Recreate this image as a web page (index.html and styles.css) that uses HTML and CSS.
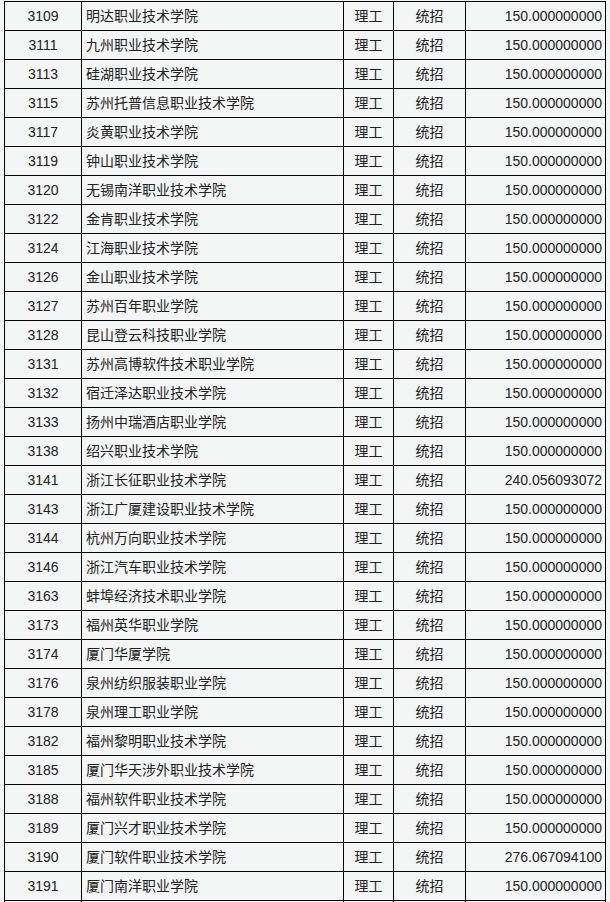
FILE: index.html
```html
<!DOCTYPE html>
<html lang="zh-CN">
<head>
<meta charset="utf-8">
<title>院校录取分数</title>
<link rel="stylesheet" href="styles.css">
</head>
<body>
<table class="score-table">
<colgroup>
<col class="c-code"><col class="c-name"><col class="c-type"><col class="c-batch"><col class="c-score">
</colgroup>
<tbody>
<tr><td class="code">3109</td><td class="name">明达职业技术学院</td><td class="mid">理工</td><td class="mid">统招</td><td class="score">150.000000000</td></tr>
<tr><td class="code">3111</td><td class="name">九州职业技术学院</td><td class="mid">理工</td><td class="mid">统招</td><td class="score">150.000000000</td></tr>
<tr><td class="code">3113</td><td class="name">硅湖职业技术学院</td><td class="mid">理工</td><td class="mid">统招</td><td class="score">150.000000000</td></tr>
<tr><td class="code">3115</td><td class="name">苏州托普信息职业技术学院</td><td class="mid">理工</td><td class="mid">统招</td><td class="score">150.000000000</td></tr>
<tr><td class="code">3117</td><td class="name">炎黄职业技术学院</td><td class="mid">理工</td><td class="mid">统招</td><td class="score">150.000000000</td></tr>
<tr><td class="code">3119</td><td class="name">钟山职业技术学院</td><td class="mid">理工</td><td class="mid">统招</td><td class="score">150.000000000</td></tr>
<tr><td class="code">3120</td><td class="name">无锡南洋职业技术学院</td><td class="mid">理工</td><td class="mid">统招</td><td class="score">150.000000000</td></tr>
<tr><td class="code">3122</td><td class="name">金肯职业技术学院</td><td class="mid">理工</td><td class="mid">统招</td><td class="score">150.000000000</td></tr>
<tr><td class="code">3124</td><td class="name">江海职业技术学院</td><td class="mid">理工</td><td class="mid">统招</td><td class="score">150.000000000</td></tr>
<tr><td class="code">3126</td><td class="name">金山职业技术学院</td><td class="mid">理工</td><td class="mid">统招</td><td class="score">150.000000000</td></tr>
<tr><td class="code">3127</td><td class="name">苏州百年职业学院</td><td class="mid">理工</td><td class="mid">统招</td><td class="score">150.000000000</td></tr>
<tr><td class="code">3128</td><td class="name">昆山登云科技职业学院</td><td class="mid">理工</td><td class="mid">统招</td><td class="score">150.000000000</td></tr>
<tr><td class="code">3131</td><td class="name">苏州高博软件技术职业学院</td><td class="mid">理工</td><td class="mid">统招</td><td class="score">150.000000000</td></tr>
<tr><td class="code">3132</td><td class="name">宿迁泽达职业技术学院</td><td class="mid">理工</td><td class="mid">统招</td><td class="score">150.000000000</td></tr>
<tr><td class="code">3133</td><td class="name">扬州中瑞酒店职业学院</td><td class="mid">理工</td><td class="mid">统招</td><td class="score">150.000000000</td></tr>
<tr><td class="code">3138</td><td class="name">绍兴职业技术学院</td><td class="mid">理工</td><td class="mid">统招</td><td class="score">150.000000000</td></tr>
<tr><td class="code">3141</td><td class="name">浙江长征职业技术学院</td><td class="mid">理工</td><td class="mid">统招</td><td class="score">240.056093072</td></tr>
<tr><td class="code">3143</td><td class="name">浙江广厦建设职业技术学院</td><td class="mid">理工</td><td class="mid">统招</td><td class="score">150.000000000</td></tr>
<tr><td class="code">3144</td><td class="name">杭州万向职业技术学院</td><td class="mid">理工</td><td class="mid">统招</td><td class="score">150.000000000</td></tr>
<tr><td class="code">3146</td><td class="name">浙江汽车职业技术学院</td><td class="mid">理工</td><td class="mid">统招</td><td class="score">150.000000000</td></tr>
<tr><td class="code">3163</td><td class="name">蚌埠经济技术职业学院</td><td class="mid">理工</td><td class="mid">统招</td><td class="score">150.000000000</td></tr>
<tr><td class="code">3173</td><td class="name">福州英华职业学院</td><td class="mid">理工</td><td class="mid">统招</td><td class="score">150.000000000</td></tr>
<tr><td class="code">3174</td><td class="name">厦门华厦学院</td><td class="mid">理工</td><td class="mid">统招</td><td class="score">150.000000000</td></tr>
<tr><td class="code">3176</td><td class="name">泉州纺织服装职业学院</td><td class="mid">理工</td><td class="mid">统招</td><td class="score">150.000000000</td></tr>
<tr><td class="code">3178</td><td class="name">泉州理工职业学院</td><td class="mid">理工</td><td class="mid">统招</td><td class="score">150.000000000</td></tr>
<tr><td class="code">3182</td><td class="name">福州黎明职业技术学院</td><td class="mid">理工</td><td class="mid">统招</td><td class="score">150.000000000</td></tr>
<tr><td class="code">3185</td><td class="name">厦门华天涉外职业技术学院</td><td class="mid">理工</td><td class="mid">统招</td><td class="score">150.000000000</td></tr>
<tr><td class="code">3188</td><td class="name">福州软件职业技术学院</td><td class="mid">理工</td><td class="mid">统招</td><td class="score">150.000000000</td></tr>
<tr><td class="code">3189</td><td class="name">厦门兴才职业技术学院</td><td class="mid">理工</td><td class="mid">统招</td><td class="score">150.000000000</td></tr>
<tr><td class="code">3190</td><td class="name">厦门软件职业技术学院</td><td class="mid">理工</td><td class="mid">统招</td><td class="score">276.067094100</td></tr>
<tr><td class="code">3191</td><td class="name">厦门南洋职业学院</td><td class="mid">理工</td><td class="mid">统招</td><td class="score">150.000000000</td></tr>
<tr><td class="code"></td><td class="name"></td><td class="mid"></td><td class="mid"></td><td class="score"></td></tr>
</tbody>
</table>
</body>
</html>
```

FILE: styles.css
```css
html {
  overflow: hidden;
  background: #f4f5f5;
}
body {
  margin: 0;
  padding: 1px 0 0 4px;
  background: #f4f5f5;
  color: #222;
  font-family: "Liberation Sans", "Noto Sans CJK SC", sans-serif;
  font-size: 14px;
}
.score-table {
  border-collapse: collapse;
  table-layout: fixed;
  width: 602px;
}
.c-code { width: 77px; }
.c-name { width: 262px; }
.c-type { width: 50px; }
.c-batch { width: 72px; }
.c-score { width: 140px; }
.score-table td {
  border: 1px solid #000;
  height: 28px;
  padding: 0;
  line-height: 28px;
  white-space: nowrap;
  overflow: hidden;
}
.code { text-align: center; }
.name { text-align: left; padding-left: 4px !important; }
.mid { text-align: center; }
.score { text-align: right; padding-right: 3px !important; }
```
